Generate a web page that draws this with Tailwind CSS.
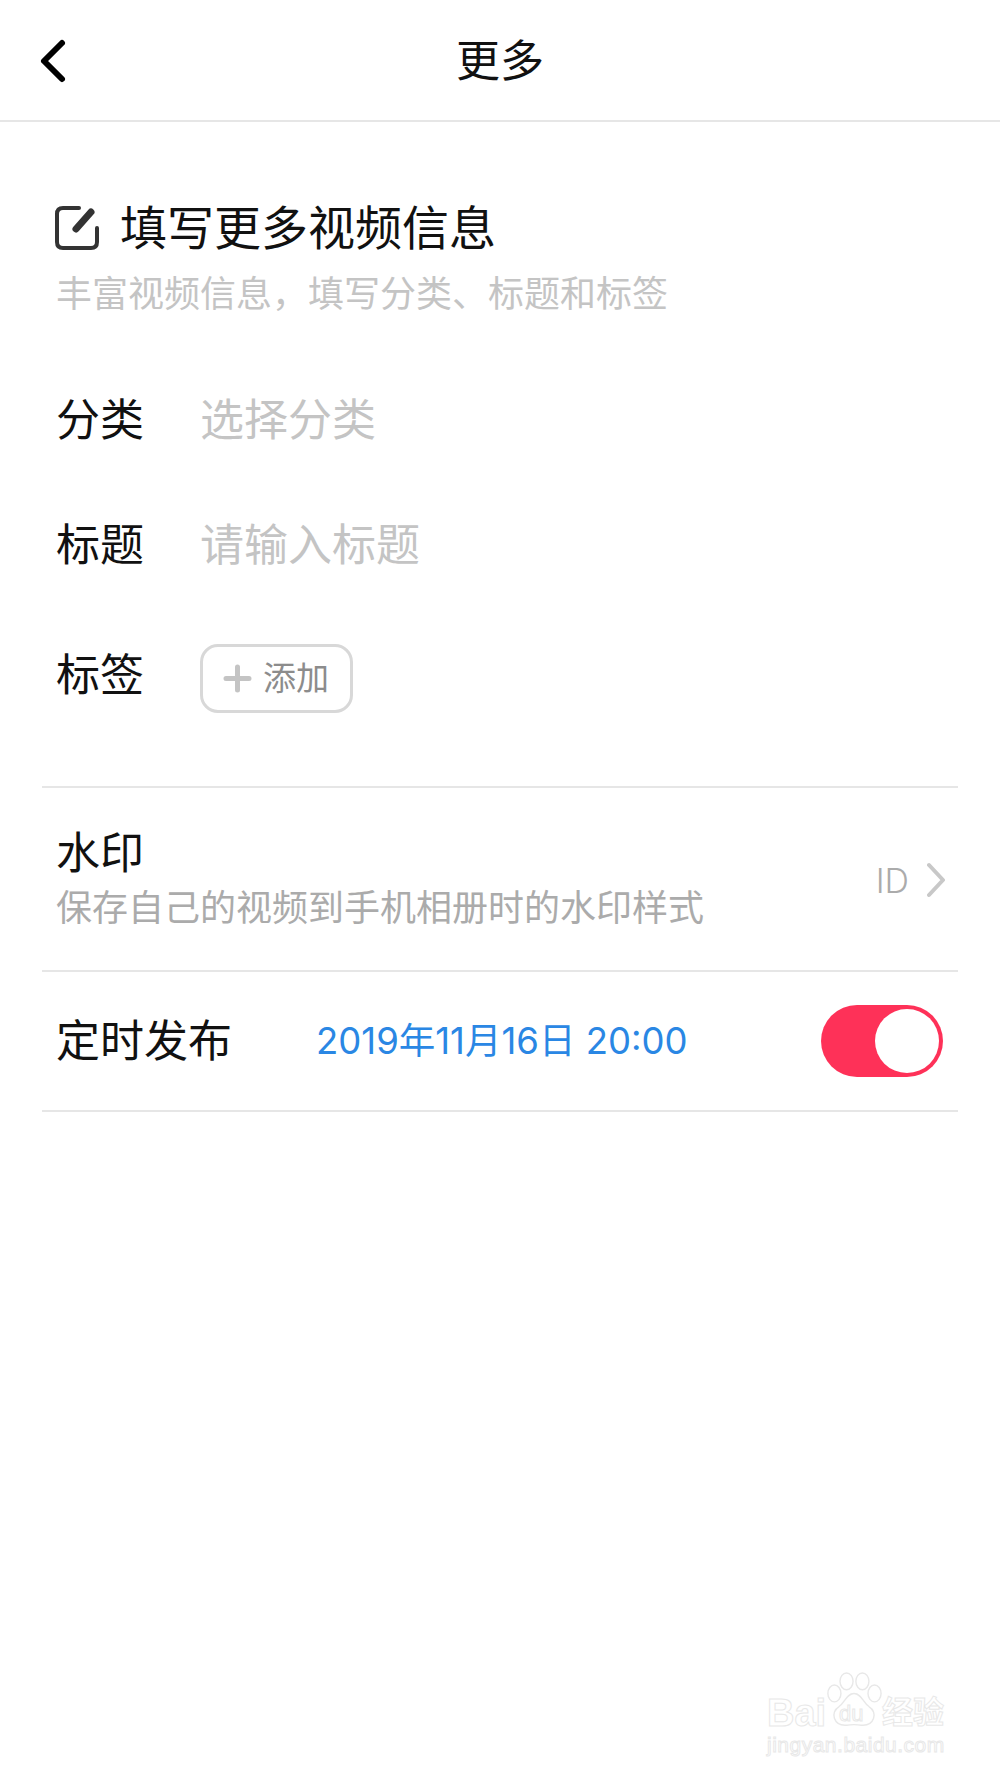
<!DOCTYPE html>
<html lang="zh-CN">
<head>
    <meta charset="UTF-8">
    <title>更多</title>
    <script src="https://cdn.jsdelivr.net/npm/@tailwindcss/browser@4"></script>
</head>
<body class="bg-white">
    <div class="relative w-[1000px] h-[1778px] overflow-hidden font-['Inter','Noto_Sans_CJK_SC',sans-serif] text-[#111]">
        <!-- Navigation -->
        <header class="relative h-[122px] pt-[2px] border-b-2 border-[#e6e6e6] flex items-center justify-center">
            <svg class="absolute left-[38px] top-[37px]" width="30" height="48" viewBox="0 0 30 48" fill="none" stroke="#000" stroke-width="6" stroke-linecap="round" stroke-linejoin="round"><path d="M24 6 L6 24 L24 42"/></svg>
            <h1 class="text-[44px] leading-none">更多</h1>
        </header>

        <!-- Video info -->
        <section class="pl-[56px] pt-[82px]">
            <div class="flex items-center h-[48px]">
                <svg class="w-[46px] h-[46px] shrink-0 -ml-[2px]" viewBox="0 0 46 46" fill="none" stroke="#333" stroke-width="4" stroke-linecap="round"><path d="M25 3 H9 Q3 3 3 9 V37 Q3 43 9 43 H37 Q43 43 43 37 V23"/><path d="M22 24 L37 7" stroke-width="7"/></svg>
                <h2 class="ml-[20px] -mt-[2px] text-[47px] leading-none">填写更多视频信息</h2>
            </div>
            <p class="mt-[20px] text-[36px] leading-[44px] text-[#c4c4c4]">丰富视频信息&#xFF0C;填写分类、标题和标签</p>
            <div class="mt-[74px] flex items-center h-[60px] text-[44px]">
                <span class="w-[144px]">分类</span><span class="text-[#c4c4c4]">选择分类</span>
            </div>
            <div class="mt-[65px] flex items-center h-[60px] text-[44px]">
                <span class="w-[144px]">标题</span><span class="text-[#c4c4c4]">请输入标题</span>
            </div>
            <div class="mt-[69px] flex items-center h-[69px]">
                <span class="w-[144px] text-[44px] -mt-[8px]">标签</span>
                <button class="w-[153px] h-[69px] border-[3px] border-[#d8d8d8] rounded-[18px] flex items-center pl-[20px] text-[33px] text-[#8c8c8c]">
                    <svg width="29" height="29" viewBox="0 0 29 29" stroke="#c4c4c4" stroke-width="5" stroke-linecap="round"><path d="M14.5 3 V26 M3 14.5 H26"/></svg>
                    <span class="ml-[11px]">添加</span>
                </button>
            </div>
        </section>

        <!-- Settings rows -->
        <section class="mx-[42px] mt-[73px] border-t-2 border-[#e6e6e6]">
            <div class="h-[184px] border-b-2 border-[#e6e6e6] flex items-center justify-between pl-[14px] pr-[13px]">
                <div class="-mt-[1px]">
                    <p class="text-[44px] leading-[52px]">水印</p>
                    <p class="mt-[7px] text-[36px] leading-[44px] text-[#ababab]">保存自己的视频到手机相册时的水印样式</p>
                </div>
                <div class="flex items-center mt-[2px]">
                    <span class="text-[34px] text-[#ababab] font-light">ID</span>
                    <svg class="ml-[18px]" width="18" height="36" viewBox="0 0 18 36" fill="none" stroke="#c8c8c8" stroke-width="4" stroke-linecap="round" stroke-linejoin="round"><path d="M2 3 L16 18 L2 33"/></svg>
                </div>
            </div>
            <div class="h-[140px] border-b-2 border-[#e6e6e6] flex items-center pl-[14px] pr-[15px]">
                <span class="w-[260px] text-[44px]">定时发布</span>
                <span class="text-[36.5px] text-[#2a87e4]">2019年11月16日 20:00</span>
                <div class="ml-auto w-[122px] h-[72px] rounded-full bg-[#fe3158] flex items-center justify-end pr-[4px]">
                    <div class="w-[64px] h-[64px] rounded-full bg-white"></div>
                </div>
            </div>
        </section>

        <!-- Watermark -->
        <div class="absolute left-[767px] top-[1670px] w-[190px] h-[90px] text-transparent [-webkit-text-stroke:1px_#e8e8e8] font-['Liberation_Sans','Noto_Sans_CJK_SC',sans-serif]">
            <svg class="absolute left-[59px] top-[1px]" width="56" height="58" viewBox="0 0 60 58" fill="none" stroke="#e8e8e8" stroke-width="1.5">
                <ellipse cx="9" cy="22" rx="7" ry="9"/><ellipse cx="22" cy="9" rx="7" ry="9"/><ellipse cx="39" cy="9" rx="7" ry="9"/><ellipse cx="52" cy="22" rx="7" ry="9"/>
                <path d="M30 22 C38 22 40 32 46 36 C56 42 52 57 38 56 C32 55 28 55 22 56 C8 57 4 42 14 36 C20 32 22 22 30 22 Z"/>
            </svg>
            <span class="absolute left-0 top-[24px] text-[38px] leading-none font-bold">Bai</span>
            <span class="absolute left-[72px] top-[33px] text-[22px] leading-none">du</span>
            <span class="absolute left-[115px] top-[27px] text-[31px] leading-none font-bold">经验</span>
            <span class="absolute left-0 top-[64px] text-[21px] leading-none tracking-[0.5px]">jingyan.baidu.com</span>
        </div>
    </div>
</body>
</html>
